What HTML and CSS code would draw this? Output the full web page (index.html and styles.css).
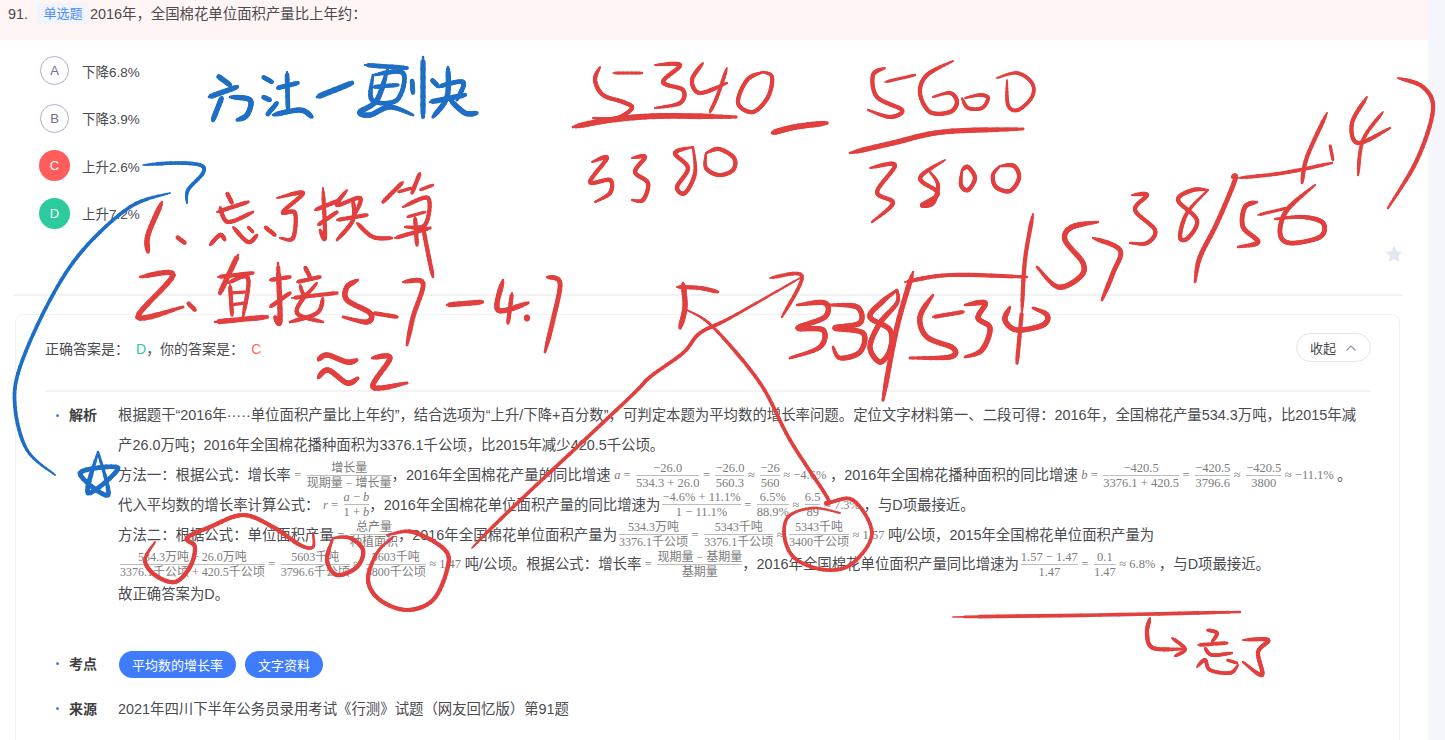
FILE: index.html
```html
<!DOCTYPE html>
<html lang="en">
<head>
    <meta charset="UTF-8">
    <meta name="viewport" content="width=device-width, initial-scale=1.0">
    <title>第91题</title>
    <link rel="stylesheet" href="styles.css">
</head>
<body>
    <div class="page">
        <div class="q-head">
            <span class="q-num">91.</span>
            <span class="q-tag">单选题</span>
            <span class="q-text">2016年，全国棉花单位面积产量比上年约：</span>
        </div>

        <div class="options">
            <div class="option"><span class="opt-mark">A</span><span>下降6.8%</span></div>
            <div class="option"><span class="opt-mark">B</span><span>下降3.9%</span></div>
            <div class="option"><span class="opt-mark wrong">C</span><span>上升2.6%</span></div>
            <div class="option"><span class="opt-mark right">D</span><span>上升7.2%</span></div>
        </div>

        <div class="fav">
            <svg width="18" height="18" viewBox="0 0 18 18"><path d="M9 .8l2.5 5.5 6 .7-4.4 4 1.2 6L9 14l-5.3 3 1.2-6L.5 7l6-.7z" fill="#e3e7f1"/></svg>
        </div>

        <div class="divider"></div>

        <div class="card">
            <div class="answer-row">
                <div>正确答案是：<span class="ans right-text">D</span>，你的答案是：<span class="ans wrong-text">C</span></div>
                <div class="collapse">收起
                    <svg width="12" height="8" viewBox="0 0 12 8"><path d="M1.5 6.5L6 2l4.500 4.500" fill="none" stroke="#8d93a5" stroke-width="1.100"/></svg>
                </div>
            </div>

            <div class="sec sec-first">
                <div class="sec-label">解析</div>
                <div class="sec-body">
                    <p class="para">根据题干“2016年·····单位面积产量比上年约”，结合选项为“上升/下降+百分数”，可判定本题为平均数的增长率问题。定位文字材料第一、二段可得：2016年，全国棉花产量534.3万吨，比2015年减产26.0万吨；2016年全国棉花播种面积为3376.1千公顷，比2015年减少420.5千公顷。</p>

                    <div class="line">方法一：根据公式：增长率<span class="m">=</span>
                        <span class="frac cn"><span>增长量</span><span>现期量 − 增长量</span></span>，2016年全国棉花产量的同比增速<span class="m"><i>a</i> =</span>
                        <span class="frac"><span>−26.0</span><span>534.3 + 26.0</span></span><span class="m">=</span>
                        <span class="frac"><span>−26.0</span><span>560.3</span></span><span class="m">≈</span>
                        <span class="frac"><span>−26</span><span>560</span></span><span class="m">≈ −4.6%</span>，2016年全国棉花播种面积的同比增速<span class="m"><i>b</i> =</span>
                        <span class="frac"><span>−420.5</span><span>3376.1 + 420.5</span></span><span class="m">=</span>
                        <span class="frac"><span>−420.5</span><span>3796.6</span></span><span class="m">≈</span>
                        <span class="frac"><span>−420.5</span><span>3800</span></span><span class="m">≈ −11.1%</span>。
                    </div>

                    <div class="line">代入平均数的增长率计算公式：<span class="m"><i>r</i> =</span>
                        <span class="frac"><span><i>a</i> − <i>b</i></span><span>1 + <i>b</i></span></span>，2016年全国棉花单位面积产量的同比增速为
                        <span class="frac"><span>−4.6% + 11.1%</span><span>1 − 11.1%</span></span><span class="m">=</span>
                        <span class="frac"><span>6.5%</span><span>88.9%</span></span><span class="m">≈</span>
                        <span class="frac"><span>6.5</span><span>89</span></span><span class="m">≈ 7.3%</span>，与D项最接近。
                    </div>

                    <div class="line">方法二：根据公式：单位面积产量<span class="m">=</span>
                        <span class="frac cn"><span>总产量</span><span>种植面积</span></span>，2016年全国棉花单位面积产量为
                        <span class="frac cn"><span>534.3万吨</span><span>3376.1千公顷</span></span><span class="m">=</span>
                        <span class="frac cn"><span>5343千吨</span><span>3376.1千公顷</span></span><span class="m">≈</span>
                        <span class="frac cn"><span>5343千吨</span><span>3400千公顷</span></span><span class="m">≈ 1.57</span>吨/公顷，2015年全国棉花单位面积产量为
                    </div>

                    <div class="line">
                        <span class="frac cn"><span>534.3万吨 + 26.0万吨</span><span>3376.1千公顷 + 420.5千公顷</span></span><span class="m">=</span>
                        <span class="frac cn"><span>5603千吨</span><span>3796.6千公顷</span></span><span class="m">≈</span>
                        <span class="frac cn"><span>5603千吨</span><span>3800千公顷</span></span><span class="m">≈ 1.47</span>吨/公顷。根据公式：增长率<span class="m">=</span>
                        <span class="frac cn"><span>现期量 − 基期量</span><span>基期量</span></span>，2016年全国棉花单位面积产量同比增速为
                        <span class="frac"><span>1.57 − 1.47</span><span>1.47</span></span><span class="m">=</span>
                        <span class="frac"><span>0.1</span><span>1.47</span></span><span class="m">≈ 6.8%</span>，与D项最接近。
                    </div>

                    <div class="line">故正确答案为D。</div>
                </div>
            </div>

            <div class="sec sec-tags">
                <div class="sec-label">考点</div>
                <div class="sec-body tags">
                    <span class="pill">平均数的增长率</span>
                    <span class="pill">文字资料</span>
                </div>
            </div>

            <div class="sec sec-source">
                <div class="sec-label">来源</div>
                <div class="sec-body">2021年四川下半年公务员录用考试《行测》试题（网友回忆版）第91题</div>
            </div>
        </div>

        <!-- pen marks drawn over the page, filled in by ink.js -->
        <svg id="ink" class="ink" width="1445" height="740" viewBox="0 0 1445 740"></svg>
    </div>

    <script src="ink.js"></script>
</body>
</html>
```

FILE: styles.css
```css
/* Question review page */
html, body {
    height: 740px;
    overflow: hidden;
}
body {
    margin: 0;
    background-color: #f5f6fb;
    font-family: "Liberation Sans", "Noto Sans CJK SC", sans-serif;
    font-size: 14.4px;
    color: #4a4a4f;
}
.page {
    position: relative;
    width: 1428px;
    height: 740px;
    background-color: #fff;
}
.ink {
    position: absolute;
    left: 0;
    top: 0;
    pointer-events: none;
}

/* question head */
.q-head {
    height: 40px;
    background-color: #fff5f5;
    display: flex;
    align-items: flex-start;
    line-height: 28px;
    box-sizing: border-box;
}
.q-num {
    width: 37px;
    padding-left: 8px;
    box-sizing: border-box;
}
.q-tag {
    width: 52px;
    height: 21px;
    margin-top: 3px;
    margin-right: 1px;
    font-size: 13px;
    line-height: 21px;
    text-align: center;
    color: #4d8cff;
    background-color: #f1f4fb;
    border-radius: 3px;
}

/* options */
.options {
    margin-top: 7px;
    padding-left: 39px;
}
.option {
    height: 47.5px;
    display: flex;
    align-items: center;
    font-size: 13.5px;
}
.opt-mark {
    width: 29px;
    height: 29px;
    margin-left: 1px;
    margin-right: 13px;
    border: 1px solid #aab0c8;
    border-radius: 50%;
    box-sizing: border-box;
    display: flex;
    align-items: center;
    justify-content: center;
    font-size: 13px;
    color: #6d7287;
}
.opt-mark.wrong, .opt-mark.right {
    width: 31px;
    height: 31px;
    margin-left: 0;
    margin-right: 12px;
    border: none;
    color: #fff;
}
.opt-mark.wrong { background-color: #ff5c5c; }
.opt-mark.right { background-color: #2ccb9d; }

.fav {
    margin-top: 8px;
    padding-right: 25px;
    display: flex;
    justify-content: flex-end;
    height: 18px;
}
.divider {
    height: 2px;
    margin: 31px 25px 0 13px;
    background-color: #f2f2f3;
}

/* analysis card, runs on below the fold */
.card {
    margin: 18px 28px 0 15px;
    padding: 18px 28px 0 29px;
    height: 426px;
    box-sizing: border-box;
    border: 1px solid #f1f2f5;
    border-bottom: none;
    border-radius: 8px 8px 0 0;
}
.answer-row {
    height: 29px;
    padding-bottom: 28px;
    border-bottom: 2px solid #f3f3f4;
    display: flex;
    align-items: center;
    justify-content: space-between;
    font-size: 14px;
}
.ans { margin-left: 7px; }
.ans.wrong-text { color: #ff6a5c; }
.ans.right-text { color: #2ccb9d; }
.collapse {
    width: 75px;
    height: 29px;
    border: 1px solid #e3e5ee;
    border-radius: 15px;
    box-sizing: border-box;
    display: flex;
    align-items: center;
    justify-content: center;
    gap: 9px;
    font-size: 13px;
}

.sec {
    display: flex;
}
.sec-first { margin-top: 9px; }
.sec-tags { margin-top: 42px; align-items: center; }
.sec-source { margin-top: 21px; line-height: 20px; }
.sec-label {
    width: 73px;
    flex: none;
    align-self: flex-start;
    padding-left: 24px;
    box-sizing: border-box;
    position: relative;
    font-size: 14px;
    font-weight: bold;
    line-height: 29.7px;
    color: #3d3d42;
}
.sec-tags .sec-label { align-self: center; line-height: 20px; }
.sec-source .sec-label { line-height: 20px; }
.sec-label::before {
    content: "";
    position: absolute;
    left: 11px;
    top: 50%;
    width: 3px;
    height: 3px;
    margin-top: -2px;
    border-radius: 50%;
    background-color: #4080ff;
}
.para {
    margin: 0;
    width: 1240px;
    line-height: 29.7px;
}
.line {
    height: 29.7px;
    display: flex;
    align-items: center;
    white-space: nowrap;
    line-height: 20px;
}

/* formulas */
.m, .frac {
    font-family: "Liberation Serif", "Noto Sans CJK SC", serif;
    color: #7c7c7c;
    font-size: 12.5px;
}
.m { padding: 0 3.5px; }
.frac {
    display: inline-flex;
    flex-direction: column;
    align-items: center;
    line-height: 14px;
    margin-left: 2px;
}
.frac > span:first-child {
    align-self: stretch;
    text-align: center;
    border-bottom: 1px solid #bcbcbc;
}
.frac.cn {
    font-size: 12px;
}

/* tags */
.tags {
    display: flex;
    gap: 9px;
    margin-left: 1px;
}
.pill {
    height: 27px;
    padding: 0 13px;
    display: flex;
    align-items: center;
    font-size: 13px;
    color: #fff;
    background-color: #3f7cfd;
    border-radius: 14px;
}
```

FILE: ink.js
```js
// Pen marks: each stroke is [width, x, y, x, y, ...] in page pixels
const RED = '#e23f3f';
const BLUE = '#1f6ec6';

const redStrokes = [
    // 5340 over 3380
    [4, 600,67, 595,80, 603,95, 623,102, 632,108, 617,118, 593,118], [3, 613,73, 642,73],
    [4, 655,65, 680,65, 663,82, 683,90, 680,103, 655,108],
    [4, 703,63, 692,80, 700,93, 727,83], [3.500, 727,68, 717,97, 710,112],
    [4, 763,72, 747,80, 738,103, 753,112, 768,97, 772,77, 763,72],
    [5.500, 573,127, 610,120, 660,116, 736,117],
    [5.500, 772,133, 795,127, 827,123],
    [4, 592,162, 607,158, 590,182, 610,180, 610,193, 595,202],
    [4, 632,158, 645,157, 635,172, 648,183, 643,200, 632,200],
    [4, 693,147, 675,153, 688,168, 677,187, 685,193, 695,173, 693,147],
    [4, 706,153, 719,149, 734,158, 733,170, 719,175, 706,168, 706,153],
    // 5600 over 3800
    [4, 885,68, 873,75, 877,97, 902,110, 890,117, 868,110], [3, 885,82, 915,75],
    [4, 953,61, 927,75, 920,93, 930,112, 950,112, 957,102, 950,93, 933,97],
    [3.500, 962,98, 968,108, 982,108, 988,98, 980,95, 965,98],
    [3.500, 1007,80, 1008,105, 1018,110, 1032,97, 1032,83, 1017,73, 997,78],
    [5, 850,153, 893,143, 943,132, 1023,129],
    [4, 870,168, 895,165, 877,192, 893,203, 872,222],
    [4, 945,160, 920,178, 938,193, 922,205, 933,203, 938,185, 930,172],
    [4, 962,170, 968,167, 975,178, 968,190, 961,185, 962,170],
    [4, 1000,166, 1014,166, 1019,178, 1010,191, 996,187, 993,175, 1000,166],
    // 57 38 / 56 long division
    [4, 1033,214, 1025,260, 1022,310],
    [4, 905,282, 950,275, 1027,277],
    [5, 913,272, 897,327, 883,400],
    [5, 797,305, 825,303, 825,317, 798,328, 823,330, 820,347, 790,358],
    [5, 828,305, 857,307, 860,323, 835,328, 863,333, 860,352, 840,358, 833,347],
    [5, 897,290, 882,302, 870,317, 890,330, 890,350, 880,362, 870,347, 880,323, 897,303, 897,290],
    [5, 933,295, 920,317, 927,337, 953,348, 950,357, 910,358], [4, 933,317, 963,312],
    [5, 965,305, 985,303, 978,318, 990,328, 982,350, 965,357],
    [5, 1010,307, 1005,320, 1017,330, 1043,325, 1047,315, 1033,308], [4, 1022,310, 1017,363],
    [5, 1098,222, 1072,227, 1065,240, 1083,263, 1080,277, 1058,287, 1037,267],
    [4.500, 1093,238, 1120,250, 1113,273, 1102,300],
    [4, 1132,195, 1147,195, 1135,210, 1155,230, 1147,243, 1130,243],
    [4, 1208,190, 1193,190, 1178,200, 1197,220, 1188,238, 1180,237, 1187,213, 1208,190],
    [4.500, 1232,177, 1235,180, 1217,223, 1200,257, 1195,282],
    [3.500, 1238,178, 1283,173, 1332,163],
    [4.500, 1257,202, 1245,207, 1243,227, 1258,242, 1238,247], [3, 1258,215, 1287,208],
    [4.500, 1315,185, 1287,210, 1280,233, 1290,243, 1320,237, 1323,223, 1303,217, 1275,219],
    [4, 1327,113, 1307,157, 1302,183], [3, 1330,145, 1333,160],
    [4, 1367,97, 1352,123, 1358,143, 1390,128], [3.500, 1383,112, 1363,140, 1358,175],
    [4, 1398,78, 1423,87, 1433,110, 1417,160, 1388,208],
    // arrow from the question to the 5343 circle
    [5, 683,283, 685,307, 680,328], [4, 677,287, 700,288, 718,292],
    [3.500, 687,310, 713,327, 760,383, 790,440, 827,497, 827,503, 853,500, 872,533, 853,563, 827,570, 797,560, 785,540, 788,517, 813,508, 840,513],
    [3.500, 472,548, 510,510, 627,400, 650,377, 683,353, 700,333, 730,318, 800,278],
    [3.500, 770,278, 802,276, 782,317],
    // circles on the formulas
    [4, 155,542, 145,560, 155,575, 175,582, 190,567, 195,547, 187,538, 210,527, 243,515, 273,527, 300,545, 313,547, 313,533],
    [4, 333,538, 327,560, 337,575, 357,567, 363,550, 350,538, 333,538],
    [4, 387,535, 413,532, 445,550, 447,570, 433,600, 407,610, 380,600, 368,580, 377,553, 393,537],
    // note at the bottom
    [3.500, 953,617, 1100,615, 1240,612],
    [4, 1150,618, 1147,633, 1153,648, 1183,649], [3.500, 1172,638, 1185,649, 1175,656],
    [3.500, 1207,630, 1217,633, 1212,642], [3.500, 1198,645, 1227,643],
    [3.500, 1205,648, 1212,655, 1232,653],
    [3.500, 1197,667, 1205,660, 1210,670, 1230,673, 1238,665], [3, 1227,660, 1237,663],
    [4, 1243,640, 1268,640, 1258,652, 1262,675, 1243,662],
    // first note
    [5, 162,202, 148,235, 148,252], [4, 177,237, 185,243],
    [4, 227,193, 232,203], [4, 217,212, 248,202], [4, 220,207, 228,222, 253,212],
    [4, 210,245, 220,235, 225,240], [4, 233,227, 248,242, 257,235], [3, 248,227, 253,232], [4, 265,227, 275,235],
    [4, 277,198, 303,193, 283,212, 295,213, 293,238, 280,238],
    [4, 315,210, 340,200], [4, 323,188, 325,237, 320,230], [4, 318,225, 337,212],
    [4, 347,190, 337,205, 360,198, 355,215], [4, 337,220, 367,215], [4, 353,200, 353,220, 337,240], [4, 357,223, 373,237, 392,238],
    [4, 403,182, 383,202], [3, 398,192, 412,188], [4, 420,173, 412,193], [3, 420,190, 433,185],
    [4, 403,207, 428,198, 425,225, 405,227], [3, 407,217, 425,212], [4, 395,238, 430,228], [4, 415,217, 417,245],
    [4, 423,227, 428,253, 433,277],
    // second note
    [5, 140,277, 173,275, 138,317, 183,307], [4, 188,303, 195,310],
    [5, 238,255, 220,293], [4, 218,277, 253,273], [4, 228,283, 248,278, 243,317], [4, 230,285, 232,315],
    [3, 230,293, 245,292], [3, 230,305, 245,303], [5, 215,322, 267,317],
    [4, 270,280, 290,277], [5, 278,263, 280,320, 275,317], [4, 270,307, 290,293],
    [4, 305,267, 310,277], [4, 297,282, 320,277], [3.500, 300,285, 305,295, 317,283], [4, 292,298, 337,293],
    [4, 307,293, 297,313, 323,322], [4, 323,298, 317,313, 290,322],
    [5, 358,280, 347,287, 347,300, 370,313, 367,322, 343,317], [4, 373,313, 397,317],
    [4.500, 403,282, 423,283, 413,317, 407,345], [5, 447,305, 482,302],
    [5, 503,280, 498,310, 528,303], [4, 512,293, 508,323], [5, 527,317, 527,319],
    [4.500, 547,277, 560,283, 553,320, 545,352],
    [5, 318,360, 327,355, 347,362, 357,360], [5, 318,378, 328,370, 347,383, 358,378],
    [5, 372,358, 390,358, 373,387, 407,383]
];

const blueStrokes = [
    // remark at the top
    [5, 218,76, 230,85], [5, 209,97, 237,87], [5, 230,97, 250,100, 247,115, 237,120], [5, 222,97, 213,120],
    [4.500, 263,77, 272,82], [4.500, 263,97, 270,100], [4.500, 267,115, 277,103],
    [4.500, 277,88, 298,83], [4.500, 287,72, 288,110], [5, 273,115, 300,110, 312,117],
    [5.500, 317,97, 352,83],
    [4.500, 365,65, 407,68], [4.500, 373,75, 403,73, 397,100, 372,100, 373,75], [4, 373,87, 398,85],
    [5, 388,68, 377,100, 360,112, 370,115, 390,107, 413,115],
    [5, 423,57, 423,117], [4.500, 412,80, 413,93], [4.500, 432,80, 437,85],
    [4.500, 437,87, 463,82, 457,100], [5, 430,102, 465,95], [5, 448,67, 447,97, 433,117], [5, 450,100, 465,113, 477,113],
    // curve from the wrong option to the star
    [3.500, 143,165, 175,163, 200,165, 203,173, 188,190, 187,203],
    [3.500, 170,193, 130,207, 83,250, 50,300, 20,367, 15,407, 27,450, 55,475],
    [4.500, 98,452, 88,493, 118,468, 80,473, 108,495, 98,452]
];

const svg = document.getElementById('ink');

// point on a Catmull-Rom curve between p1 and p2
function curvePoint(p0, p1, p2, p3, t) {
    return 0.5 * (2 * p1 + (p2 - p0) * t + (2 * p0 - 5 * p1 + 4 * p2 - p3) * t * t + (3 * p1 - p0 - 3 * p2 + p3) * t * t * t);
}

function sample(stroke) {
    const xs = [], ys = [];
    for (let i = 1; i < stroke.length; i += 2) {
        xs.push(stroke[i]);
        ys.push(stroke[i + 1]);
    }
    const points = [];
    for (let i = 0; i < xs.length - 1; i++) {
        const a = Math.max(i - 1, 0), b = i + 1, c = Math.min(i + 2, xs.length - 1);
        for (let s = 0; s < 8; s++) {
            points.push([curvePoint(xs[a], xs[i], xs[b], xs[c], s / 8), curvePoint(ys[a], ys[i], ys[b], ys[c], s / 8)]);
        }
    }
    points.push([xs[xs.length - 1], ys[ys.length - 1]]);
    return points;
}

// thinner at both ends, the way a pen lifts off
function drawStroke(stroke, color) {
    const points = sample(stroke);
    for (let i = 0; i < points.length - 1; i++) {
        const t = i / (points.length - 1);
        const line = document.createElementNS('http://www.w3.org/2000/svg', 'line');
        line.setAttribute('x1', points[i][0]);
        line.setAttribute('y1', points[i][1]);
        line.setAttribute('x2', points[i + 1][0]);
        line.setAttribute('y2', points[i + 1][1]);
        line.setAttribute('stroke', color);
        line.setAttribute('stroke-linecap', 'round');
        line.setAttribute('stroke-width', stroke[0] * (0.5 + 0.55 * Math.min(1, t * 10, (1 - t) * 5)));
        svg.appendChild(line);
    }
}

redStrokes.forEach(s => drawStroke(s, RED));
blueStrokes.forEach(s => drawStroke(s, BLUE));
```
